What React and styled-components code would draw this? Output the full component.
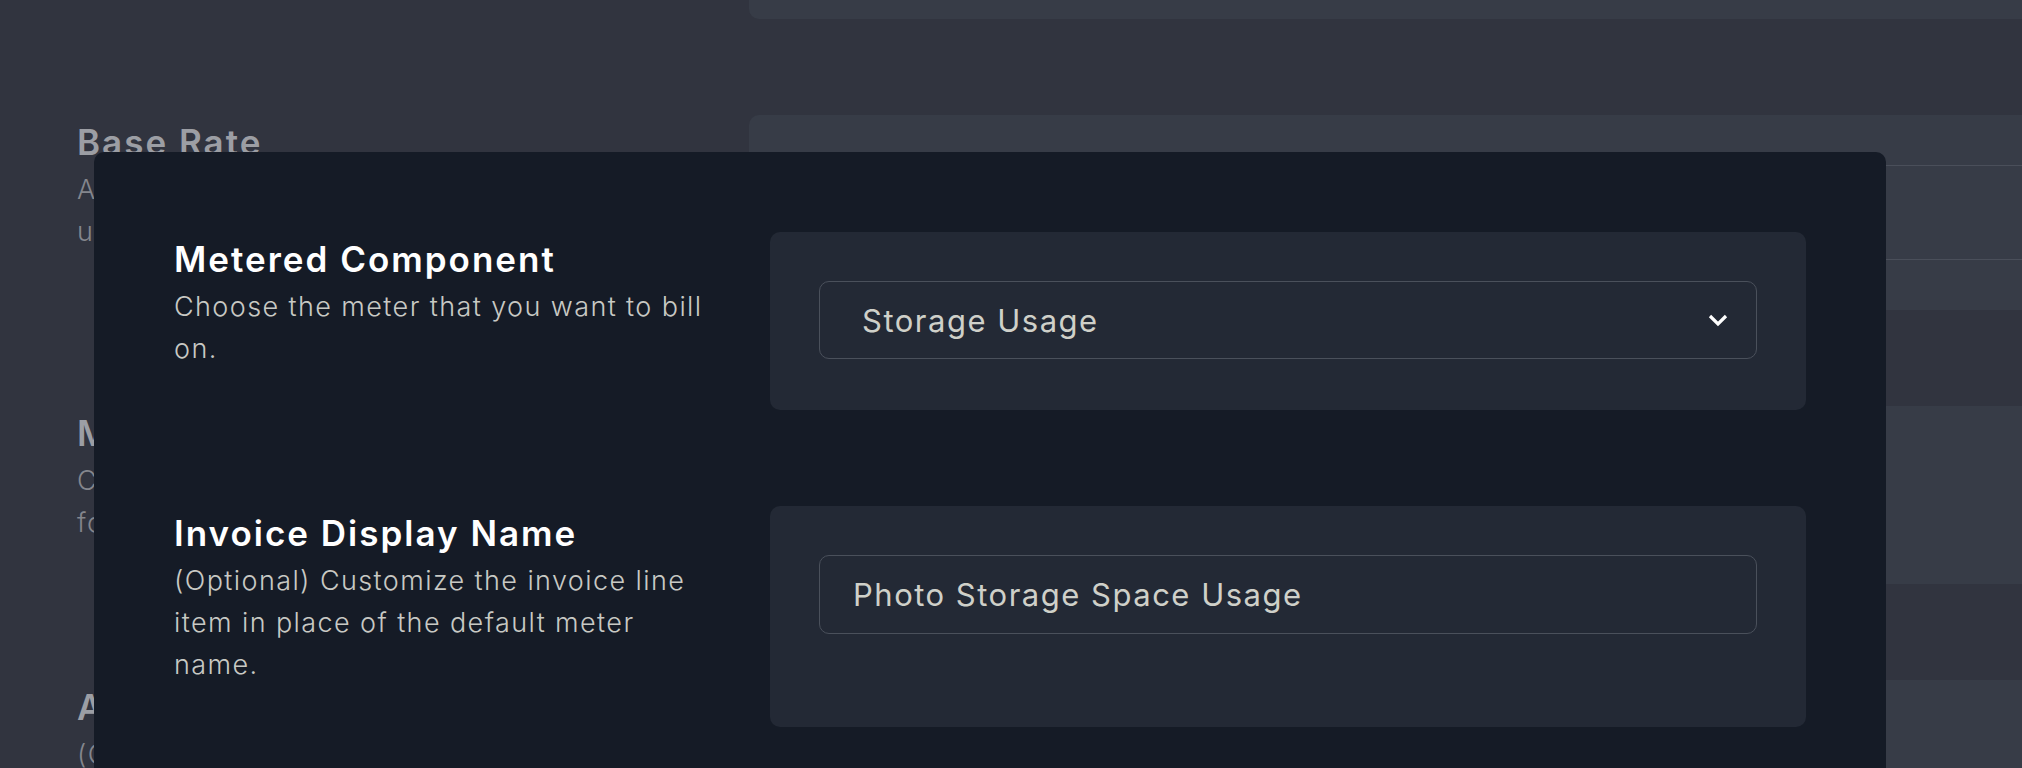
import React from "react";
import styled, { createGlobalStyle } from "styled-components";

const GlobalStyle = createGlobalStyle`
  html, body {
    margin: 0;
    padding: 0;
    background: #31343f;
    height: 768px;
    overflow: hidden;
  }
  body {
    font-family: "Inter", "Noto Sans", sans-serif;
  }
  #root {
    position: relative;
    height: 768px;
    overflow: hidden;
  }
`;

// page underneath the modal
const Page = styled.div`
  display: flex;
  flex-direction: column;
  gap: 96px;
  margin-top: -101px;
  padding-left: 77px;
`;

const PageRow = styled.div`
  display: grid;
  grid-template-columns: 636px 1400px;
  column-gap: 36px;
  align-items: start;
`;

const PageCard = styled.div`
  background: #373c47;
  border-radius: 10px;
  height: ${(p) => p.$height}px;
  padding: 50px 49px;
  box-sizing: border-box;
`;

const PageField = styled.div`
  height: 95px;
  border: 1.5px solid #4a4f5a;
  border-radius: 10px;
  box-sizing: border-box;
`;

const Label = styled.div`
  padding-top: 7px;
`;

const Title = styled.h3`
  margin: 0;
  font-family: "Inter", "Noto Sans", sans-serif;
  font-weight: 600;
  font-size: 35px;
  line-height: 40px;
  letter-spacing: 2px;
  color: ${(p) => (p.$muted ? "#9c9ea4" : "#ffffff")};
`;

const Desc = styled.p`
  margin: 7px 0 0;
  font-family: "Inter", "Noto Sans", sans-serif;
  font-weight: 300;
  font-size: 27px;
  line-height: 42px;
  letter-spacing: 1.4px;
  color: ${(p) => (p.$muted ? "#84868d" : "#c8c9c4")};
`;

// modal
const Modal = styled.div`
  position: absolute;
  top: 152px;
  left: 94px;
  width: 1792px;
  min-height: 700px;
  box-sizing: border-box;
  background: #151b26;
  border-radius: 10px;
  padding: 80px;
  display: flex;
  flex-direction: column;
  gap: 96px;
`;

const FormRow = styled.div`
  display: grid;
  grid-template-columns: 540px 1036px;
  column-gap: 56px;
  align-items: start;
`;

const Card = styled.div`
  background: #232935;
  border-radius: 10px;
  padding: 49px 49px ${(p) => p.$padBottom}px;
`;

const SelectBox = styled.div`
  display: flex;
  align-items: center;
  justify-content: space-between;
  height: 78px;
  box-sizing: border-box;
  border: 1.5px solid #4a505b;
  border-radius: 10px;
  padding: 0 28px 0 42px;
  cursor: pointer;
`;

const SelectValue = styled.span`
  font-family: "Inter", "Noto Sans", sans-serif;
  font-size: 31px;
  font-weight: 400;
  letter-spacing: 1.5px;
  color: #cfd0c9;
`;

const TextInput = styled.input`
  display: block;
  width: 100%;
  height: 79px;
  box-sizing: border-box;
  border: 1.5px solid #4a505b;
  border-radius: 10px;
  background: transparent;
  padding: 0 33px;
  font-family: "Inter", "Noto Sans", sans-serif;
  font-size: 31px;
  font-weight: 400;
  letter-spacing: 1.5px;
  color: #cfd0c9;
  outline: none;
`;

const Chevron = () => (
  <svg width="20" height="13" viewBox="0 0 20 13" fill="none">
    <polyline
      points="2,2 10,10 18,2"
      stroke="#ffffff"
      strokeWidth="3.2"
      strokeLinejoin="miter"
    />
  </svg>
);

export default function App() {
  return (
    <>
      <GlobalStyle />
      <Page>
        <PageRow>
          <div />
          <PageCard $height={120} />
        </PageRow>
        <PageRow>
          <Label>
            <Title $muted>Base Rate</Title>
            <Desc $muted>
              A fixed amount charged every period,
              <br />
              unrelated to usage.
            </Desc>
          </Label>
          <PageCard $height={195}>
            <PageField />
          </PageCard>
        </PageRow>
        <PageRow>
          <Label>
            <Title $muted>Metered Usage</Title>
            <Desc $muted>
              Charge customers by what they use
              <br />
              for each billing period.
            </Desc>
          </Label>
          <PageCard $height={178} />
        </PageRow>
        <PageRow>
          <Label>
            <Title $muted>Add-ons</Title>
            <Desc $muted>(Optional) Extra items to bill.</Desc>
          </Label>
          <PageCard $height={300} />
        </PageRow>
      </Page>

      <Modal>
        <FormRow>
          <Label>
            <Title>Metered Component</Title>
            <Desc>Choose the meter that you want to bill on.</Desc>
          </Label>
          <Card $padBottom={51}>
            <SelectBox>
              <SelectValue>Storage Usage</SelectValue>
              <Chevron />
            </SelectBox>
          </Card>
        </FormRow>
        <FormRow>
          <Label>
            <Title>Invoice Display Name</Title>
            <Desc>
              (Optional) Customize the invoice line item in place of the
              default meter name.
            </Desc>
          </Label>
          <Card $padBottom={93}>
            <TextInput readOnly value="Photo Storage Space Usage" />
          </Card>
        </FormRow>
      </Modal>
    </>
  );
}
